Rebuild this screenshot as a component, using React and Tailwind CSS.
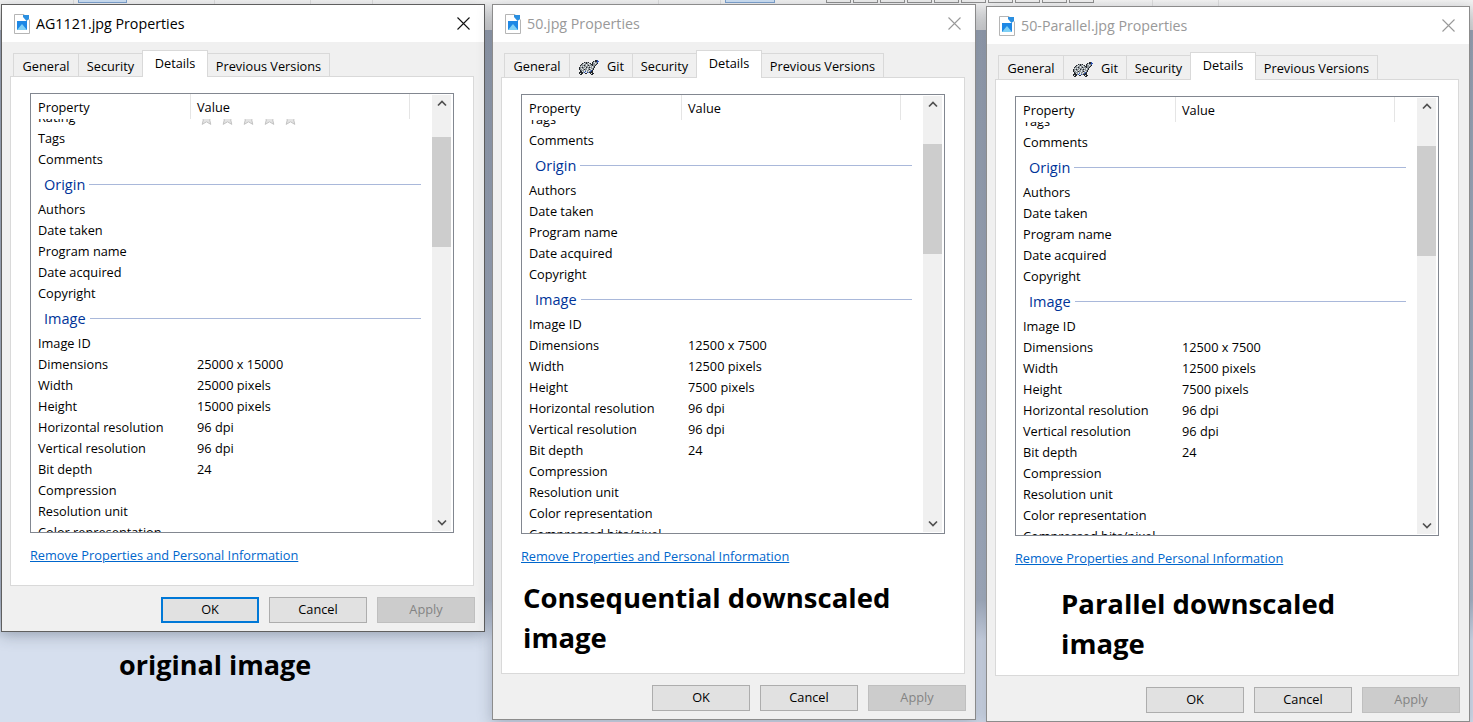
const uiFont = { fontFamily: '"Open Sans", "Noto Sans", sans-serif' };

const rowsOriginal = [
  ["Tags"], ["Comments"],
  { section: "Origin" },
  ["Authors"], ["Date taken"], ["Program name"], ["Date acquired"], ["Copyright"],
  { section: "Image" },
  ["Image ID"], ["Dimensions", "25000 x 15000"], ["Width", "25000 pixels"], ["Height", "15000 pixels"],
  ["Horizontal resolution", "96 dpi"], ["Vertical resolution", "96 dpi"], ["Bit depth", "24"],
  ["Compression"], ["Resolution unit"], ["Color representation"],
];

const rowsScaled = [
  ["Tags"], ["Comments"],
  { section: "Origin" },
  ["Authors"], ["Date taken"], ["Program name"], ["Date acquired"], ["Copyright"],
  { section: "Image" },
  ["Image ID"], ["Dimensions", "12500 x 7500"], ["Width", "12500 pixels"], ["Height", "7500 pixels"],
  ["Horizontal resolution", "96 dpi"], ["Vertical resolution", "96 dpi"], ["Bit depth", "24"],
  ["Compression"], ["Resolution unit"], ["Color representation"], ["Compressed bits/pixel"],
];

// what peeks out above the dialogs: [width, kind]
const backdropStrip = [
  [73, ""], [1, "sep"], [4, ""], [49, "blue"], [87, ""], [1, "sep"], [95, ""], [1, "sep"], [61, ""], [1, "sep"],
  [285, ""], [1, "sep"], [61, ""], [1, "sep"], [4, ""], [50, "blue"], [51, ""],
  [25, "box"], [2, ""], [25, "box"], [2, ""], [25, "box"], [2, ""], [25, "box"], [2, ""], [25, "box"], [2, ""],
  [25, "box"], [2, ""], [25, "box"], [2, ""], [25, "box"], [2, ""], [25, "box"], [2, ""], [25, "box"],
  [58, ""], [1, "sep"], [65, ""], [1, "sep"],
];

const stripClass = {
  "": "",
  sep: "bg-[#dcdcdc]",
  blue: "h-[3px] border-x border-b border-[#7da2ce] bg-[#cde0f5]",
  box: "h-[3px] border-x border-b border-[#8f8f8f] bg-[#efefef]",
};

// tortoise icon of the Git tab, by pixel
const turtlePixels = [
  ".................kkb.",
  "...............kgkkbb",
  "......kgkgk...kgwggb.",
  "....kgwgkgwgk.kggwgk.",
  "...kgwggwggwgkkgggk..",
  "..kgggkgwgkgggkggk...",
  "..gwgwggggwgwgwgk....",
  ".kggkggwkggkggwgk....",
  ".kgwggwggwggwggk.....",
  ".kggwgkggwgkgwgk.....",
  "..kgggwgwggwgbk......",
  "..kkwgwbwgwgbkk......",
  ".kkkkgbwwbgkkkk......",
  ".kwkk..kk...kwkk.....",
  "..kk.........kk......",
];
const turtleColor = { k: "#24282c", g: "#8d9499", w: "#dfe4e4", b: "#2f55b5" };

function FileIcon() {
  return (
    <svg width="16" height="20" viewBox="0 0 16 20" className="shrink-0">
      <path d="M0.5 0.5H10L15.5 6V19.5H0.5Z" fill="#fff" stroke="#b5b5b5" />
      <rect x="3" y="7" width="10" height="9" fill="#1e88e5" />
      <path d="M3 16L8 10L13 16Z" fill="#7fd0f5" />
      <path d="M9 1L15 1L15 5L12.5 7L9 3Z" fill="#2b8fe0" />
    </svg>
  );
}

function TurtleIcon() {
  return (
    <svg width="21" height="15" viewBox="0 0 21 15" shapeRendering="crispEdges" className="shrink-0">
      {turtlePixels.map((line, y) =>
        line.split("").map((c, x) =>
          c === "." ? null : <rect key={`${x}-${y}`} x={x} y={y} width="1" height="1" fill={turtleColor[c]} />
        )
      )}
    </svg>
  );
}

function Star() {
  return (
    <svg width="15" height="14" viewBox="0 0 15 14">
      <path d="M7.5 0.5L9.5 5L14.4 5.4L10.6 8.6L11.8 13.4L7.5 10.8L3.2 13.4L4.4 8.6L0.6 5.4L5.5 5Z" fill="#e4e4e4" stroke="#c2c2c2" />
    </svg>
  );
}

function Row({ name, value }) {
  return (
    <div className="flex h-[21px] items-center pl-[7px] text-[12.75px] text-black">
      <span className="w-[159px] shrink-0 whitespace-nowrap">{name}</span>
      <span className="whitespace-nowrap">{value}</span>
    </div>
  );
}

function Section({ title }) {
  return (
    <div className="flex h-[29px] items-center pl-[13px] pr-[11px]">
      <span className="text-[14.5px] text-[#003399]">{title}</span>
      <div className="ml-[4px] h-px flex-1 bg-[#a9b8da]" />
    </div>
  );
}

function PropertyList({ rows, rating, scrollTop, thumbTop }) {
  return (
    <div className="flex h-[440px] border border-[#828790] bg-white">
      <div className="flex min-w-0 flex-1 flex-col overflow-hidden">
        <div className="relative z-10 flex h-[25px] shrink-0 items-center bg-white text-[12.75px] text-black">
          <span className="h-full w-[160px] border-r border-[#e5e5e5] pl-[7px] leading-[27px]">Property</span>
          <span className="h-full w-[219px] border-r border-[#e5e5e5] pl-[6px] leading-[27px]">Value</span>
        </div>
        <div style={{ marginTop: scrollTop }}>
          {rating && (
            <div className="flex h-[21px] items-center pl-[7px] text-[12.75px]">
              <span className="w-[161px] shrink-0">Rating</span>
              <div className="flex gap-[6px]">
                <Star /><Star /><Star /><Star /><Star />
              </div>
            </div>
          )}
          {rows.map((r) =>
            r.section ? <Section key={r.section} title={r.section} /> : <Row key={r[0]} name={r[0]} value={r[1]} />
          )}
        </div>
      </div>
      <div className="my-px mr-[2px] flex w-[19px] shrink-0 flex-col bg-[#f0f0f0]">
        <div className="flex h-[17px] shrink-0 items-center justify-center">
          <svg width="10" height="7" viewBox="0 0 10 7"><path d="M1 5.5L5 1.5L9 5.5" fill="none" stroke="#505050" strokeWidth="1.7" /></svg>
        </div>
        <div className="shrink-0" style={{ height: thumbTop }} />
        <div className="h-[110px] shrink-0 bg-[#cdcdcd]" />
        <div className="flex-1" />
        <div className="flex h-[17px] shrink-0 items-center justify-center">
          <svg width="10" height="7" viewBox="0 0 10 7"><path d="M1 1.5L5 5.5L9 1.5" fill="none" stroke="#505050" strokeWidth="1.7" /></svg>
        </div>
      </div>
    </div>
  );
}

function Tab({ active, tall, width, children }) {
  if (active) {
    return (
      <div
        className={`relative z-10 -mr-px -mt-[3px] flex items-center justify-center border border-b-0 border-[#d9d9d9] bg-white text-[12.75px] text-black ${tall ? "h-[28px] pb-[2px]" : "h-[27px] pb-[1px]"}`}
        style={{ width }}
      >
        {children}
      </div>
    );
  }
  return (
    <div
      className={`-mr-px flex items-center justify-center border border-b-0 border-[#d9d9d9] bg-[#f0f0f0] pt-[2px] text-[12.75px] text-black ${tall ? "h-[25px]" : "h-[24px]"}`}
      style={{ width }}
    >
      {children}
    </div>
  );
}

function Dialog({ title, active, left, top, height, git, rows, rating, scrollTop, thumbTop, focusOk, captionClass, caption }) {
  return (
    <div
      className={`absolute flex w-[484px] flex-col border bg-[#f0f0f0] shadow-[0_4px_14px_rgba(40,50,70,0.28)] ${active ? "border-[#5f5f5f]" : "border-[#8c8c8c]"}`}
      style={{ left, top, height, ...uiFont }}
    >
      <div className="flex h-[37px] shrink-0 items-center bg-white pl-[12px] pr-[14px]">
        <FileIcon />
        <span className={`ml-[6px] flex-1 text-[14.25px] ${active ? "text-black" : "text-[#999999]"}`}>{title}</span>
        <svg width="13" height="13" viewBox="0 0 13 13">
          <path d="M0.5 0.5L12.5 12.5M12.5 0.5L0.5 12.5" stroke={active ? "#111" : "#999"} strokeWidth="1.1" />
        </svg>
      </div>

      <div className="flex min-h-0 flex-1 flex-col pl-[8px] pr-[10px] pt-[11px]">
        <div className={`flex shrink-0 pl-[3px] ${git ? "h-[24px]" : "h-[23px]"}`}>
          <Tab tall={git} width={66}>General</Tab>
          {git && (
            <Tab tall width={64}>
              <span className="flex items-center gap-[8px]"><TurtleIcon />Git</span>
            </Tab>
          )}
          <Tab tall={git} width={65}>Security</Tab>
          <Tab active tall={git} width={66}>Details</Tab>
          <Tab tall={git} width={123}>Previous Versions</Tab>
        </div>
        <div className="flex min-h-0 flex-1 flex-col border border-[#d9d9d9] bg-white px-[19px] pt-[16px]">
          <PropertyList rows={rows} rating={rating} scrollTop={scrollTop} thumbTop={thumbTop} />
          <a className="mt-[13px] block text-[12.75px] leading-[18px] text-[#0066cc] underline">
            Remove Properties and Personal Information
          </a>
          {caption && <div className={captionClass}>{caption}</div>}
        </div>
        <div className="-mr-px flex h-[45px] shrink-0 items-start justify-end gap-[10px] pt-[11px]">
          <button className={`h-[26px] w-[98px] bg-[#e1e1e1] text-[12.75px] text-black ${focusOk ? "border-2 border-[#0078d7]" : "border border-[#adadad]"}`}>OK</button>
          <button className="h-[26px] w-[98px] border border-[#adadad] bg-[#e1e1e1] text-[12.75px] text-black">Cancel</button>
          <button className="h-[26px] w-[98px] border border-[#bfbfbf] bg-[#cccccc] text-[12.75px] text-[#838383]">Apply</button>
        </div>
      </div>
    </div>
  );
}

export default function App() {
  return (
    <div className="relative h-[722px] w-[1473px] overflow-hidden bg-[#d6dfee]">
      <div className="flex h-[30px] bg-gradient-to-b from-[#f3f3f3] to-[#d8d8d8]">
        {backdropStrip.map(([w, kind], i) => (
          <div key={i} className={`shrink-0 ${stripClass[kind]}`} style={{ width: w }} />
        ))}
      </div>
      <div className="h-[570px] bg-gradient-to-b from-[#9aa4b4] to-[#aab5c6]" />
      <div className="h-[40px] bg-gradient-to-b from-[#aab5c6] to-[#d6dfee]" />

      <Dialog
        title="AG1121.jpg Properties"
        active
        left={1}
        top={4}
        height={628}
        rows={rowsOriginal}
        rating
        scrollTop={-12}
        thumbTop={25}
        focusOk
      />
      <div
        className="absolute left-[119px] top-[646px] text-[27px] font-bold leading-[38px] text-black"
        style={uiFont}
      >
        original image
      </div>

      <Dialog
        title="50.jpg Properties"
        left={492}
        top={4}
        height={716}
        git
        rows={rowsScaled}
        scrollTop={-11}
        thumbTop={31}
        captionClass="ml-[2px] mt-[13px] text-[27.5px] font-bold leading-[40px] text-black"
        caption={<>Consequential downscaled<br />image</>}
      />

      <Dialog
        title="50-Parallel.jpg Properties"
        left={986}
        top={6}
        height={716}
        git
        rows={rowsScaled}
        scrollTop={-11}
        thumbTop={31}
        captionClass="ml-[46px] mt-[17px] text-[27.5px] font-bold leading-[40px] text-black"
        caption={<>Parallel downscaled<br />image</>}
      />
    </div>
  );
}
